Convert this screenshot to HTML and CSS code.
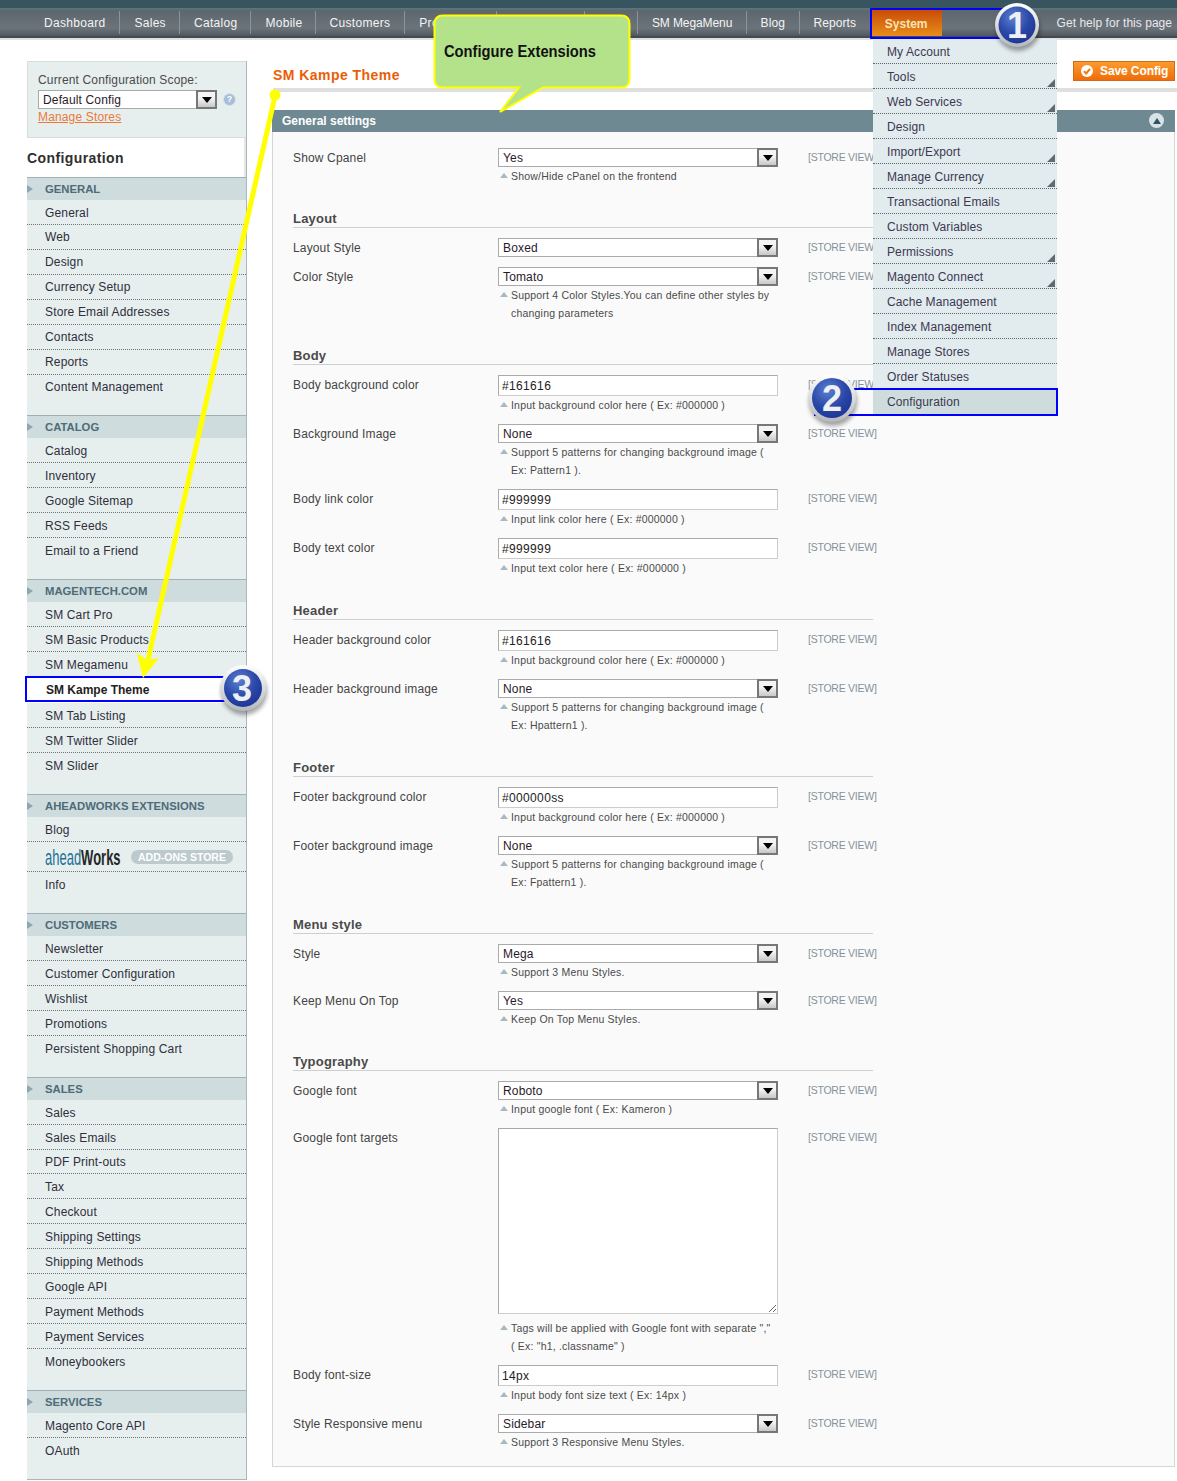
FILE: index.html
```html
<!DOCTYPE html>
<html lang="en">
<head>
<meta charset="utf-8">
<title>Configuration / System / Magento Admin</title>
<link rel="stylesheet" href="styles.css">
</head>
<body>
<div class="page">
  <div class="topband"></div>
  <nav class="nav">
    <ul class="nav-list">
      <li class="nav-first">Dashboard</li><li>Sales</li><li>Catalog</li><li class="nav-short">Mobile</li><li class="nav-first">Customers</li><li>Promotions</li><li>Newsletter</li><li class="nav-cms">CMS</li><li class="nav-tight nav-mega">SM MegaMenu</li><li class="nav-tight">Blog</li><li class="nav-tight">Reports</li><li class="nav-active">System</li>
    </ul>
    <a class="nav-help">Get help for this page</a>
  </nav>

  <div class="columns">
    <aside class="side">
      <div class="scope">
        <div class="scope-label">Current Configuration Scope:</div>
        <div class="scope-row">
          <div class="select scope-select"><span class="select-value">Default Config</span><span class="select-btn"><i class="select-arrow"></i></span></div>
          <span class="help-dot">?</span>
        </div>
        <a class="scope-link">Manage Stores</a>
      </div>
      <h3 class="side-title">Configuration</h3>

      <section class="group group-first">
        <h4 class="group-head"><i class="group-tri"></i>GENERAL</h4>
        <ul class="group-list"><li>General</li><li>Web</li><li>Design</li><li>Currency Setup</li><li>Store Email Addresses</li><li>Contacts</li><li>Reports</li><li>Content Management</li></ul>
      </section>
      <section class="group">
        <h4 class="group-head"><i class="group-tri"></i>CATALOG</h4>
        <ul class="group-list"><li>Catalog</li><li>Inventory</li><li>Google Sitemap</li><li>RSS Feeds</li><li>Email to a Friend</li></ul>
      </section>
      <section class="group">
        <h4 class="group-head"><i class="group-tri"></i>MAGENTECH.COM</h4>
        <ul class="group-list"><li>SM Cart Pro</li><li>SM Basic Products</li><li>SM Megamenu</li><li class="is-current">SM Kampe Theme</li><li>SM Tab Listing</li><li>SM Twitter Slider</li><li>SM Slider</li></ul>
      </section>
      <section class="group">
        <h4 class="group-head"><i class="group-tri"></i>AHEADWORKS EXTENSIONS</h4>
        <ul class="group-list">
          <li>Blog</li>
          <li class="aw-row"><svg class="aw-logo" width="76" height="26" viewBox="0 0 76 26"><text transform="translate(0 21) scale(1 1.650)"><tspan class="aw-ahead">ahead</tspan><tspan class="aw-works">Works</tspan></text></svg><span class="aw-pill">ADD-ONS STORE</span></li>
          <li>Info</li>
        </ul>
      </section>
      <section class="group">
        <h4 class="group-head"><i class="group-tri"></i>CUSTOMERS</h4>
        <ul class="group-list"><li>Newsletter</li><li>Customer Configuration</li><li>Wishlist</li><li>Promotions</li><li>Persistent Shopping Cart</li></ul>
      </section>
      <section class="group">
        <h4 class="group-head"><i class="group-tri"></i>SALES</h4>
        <ul class="group-list"><li>Sales</li><li>Sales Emails</li><li class="is-short">PDF Print-outs</li><li>Tax</li><li>Checkout</li><li>Shipping Settings</li><li>Shipping Methods</li><li>Google API</li><li>Payment Methods</li><li>Payment Services</li><li>Moneybookers</li></ul>
      </section>
      <section class="group">
        <h4 class="group-head"><i class="group-tri"></i>SERVICES</h4>
        <ul class="group-list"><li>Magento Core API</li><li>OAuth</li></ul>
      </section>
    </aside>

    <main class="main">
      <div class="main-head">
        <h3 class="main-title">SM Kampe Theme</h3>
        <button class="save-btn"><span class="save-tick"><svg width="12" height="12" viewBox="0 0 12 12"><path d="M3 6.200 5.200 8.400 9 3.800" fill="none" stroke="#f07a12" stroke-width="2"/></svg></span>Save Config</button>
      </div>
      <div class="panel-head">
        <span>General settings</span>
        <span class="collapse"><i class="collapse-tri"></i></span>
      </div>
      <div class="panel">
        <div class="row"><label class="row-label">Show Cpanel</label><div class="row-field"><div class="select"><span class="select-value">Yes</span><span class="select-btn"><i class="select-arrow"></i></span></div><p class="note">Show/Hide cPanel on the frontend</p></div><span class="row-scope">[STORE VIEW]</span></div>

        <h4 class="legend">Layout</h4>
        <div class="row"><label class="row-label">Layout Style</label><div class="row-field"><div class="select"><span class="select-value">Boxed</span><span class="select-btn"><i class="select-arrow"></i></span></div></div><span class="row-scope">[STORE VIEW]</span></div>
        <div class="row"><label class="row-label">Color Style</label><div class="row-field"><div class="select"><span class="select-value">Tomato</span><span class="select-btn"><i class="select-arrow"></i></span></div><p class="note">Support 4 Color Styles.You can define other styles by changing parameters</p></div><span class="row-scope">[STORE VIEW]</span></div>

        <h4 class="legend">Body</h4>
        <div class="row"><label class="row-label">Body background color</label><div class="row-field"><input class="text" type="text" value="#161616"><p class="note">Input background color here ( Ex: #000000 )</p></div><span class="row-scope">[STORE VIEW]</span></div>
        <div class="row"><label class="row-label">Background Image</label><div class="row-field"><div class="select"><span class="select-value">None</span><span class="select-btn"><i class="select-arrow"></i></span></div><p class="note">Support 5 patterns for changing background image ( Ex: Pattern1 ).</p></div><span class="row-scope">[STORE VIEW]</span></div>
        <div class="row"><label class="row-label">Body link color</label><div class="row-field"><input class="text" type="text" value="#999999"><p class="note">Input link color here ( Ex: #000000 )</p></div><span class="row-scope">[STORE VIEW]</span></div>
        <div class="row"><label class="row-label">Body text color</label><div class="row-field"><input class="text" type="text" value="#999999"><p class="note">Input text color here ( Ex: #000000 )</p></div><span class="row-scope">[STORE VIEW]</span></div>

        <h4 class="legend">Header</h4>
        <div class="row"><label class="row-label">Header background color</label><div class="row-field"><input class="text" type="text" value="#161616"><p class="note">Input background color here ( Ex: #000000 )</p></div><span class="row-scope">[STORE VIEW]</span></div>
        <div class="row"><label class="row-label">Header background image</label><div class="row-field"><div class="select"><span class="select-value">None</span><span class="select-btn"><i class="select-arrow"></i></span></div><p class="note">Support 5 patterns for changing background image ( Ex: Hpattern1 ).</p></div><span class="row-scope">[STORE VIEW]</span></div>

        <h4 class="legend">Footer</h4>
        <div class="row"><label class="row-label">Footer background color</label><div class="row-field"><input class="text" type="text" value="#000000ss"><p class="note">Input background color here ( Ex: #000000 )</p></div><span class="row-scope">[STORE VIEW]</span></div>
        <div class="row"><label class="row-label">Footer background image</label><div class="row-field"><div class="select"><span class="select-value">None</span><span class="select-btn"><i class="select-arrow"></i></span></div><p class="note">Support 5 patterns for changing background image ( Ex: Fpattern1 ).</p></div><span class="row-scope">[STORE VIEW]</span></div>

        <h4 class="legend">Menu style</h4>
        <div class="row"><label class="row-label">Style</label><div class="row-field"><div class="select"><span class="select-value">Mega</span><span class="select-btn"><i class="select-arrow"></i></span></div><p class="note">Support 3 Menu Styles.</p></div><span class="row-scope">[STORE VIEW]</span></div>
        <div class="row"><label class="row-label">Keep Menu On Top</label><div class="row-field"><div class="select"><span class="select-value">Yes</span><span class="select-btn"><i class="select-arrow"></i></span></div><p class="note">Keep On Top Menu Styles.</p></div><span class="row-scope">[STORE VIEW]</span></div>

        <h4 class="legend">Typography</h4>
        <div class="row"><label class="row-label">Google font</label><div class="row-field"><div class="select"><span class="select-value">Roboto</span><span class="select-btn"><i class="select-arrow"></i></span></div><p class="note">Input google font ( Ex: Kameron )</p></div><span class="row-scope">[STORE VIEW]</span></div>
        <div class="row"><label class="row-label">Google font targets</label><div class="row-field"><textarea class="area"></textarea><p class="note note-area">Tags will be applied with Google font with separate "," ( Ex: "h1, .classname" )</p></div><span class="row-scope">[STORE VIEW]</span></div>
        <div class="row"><label class="row-label">Body font-size</label><div class="row-field"><input class="text" type="text" value="14px"><p class="note">Input body font size text ( Ex: 14px )</p></div><span class="row-scope">[STORE VIEW]</span></div>
        <div class="row"><label class="row-label">Style Responsive menu</label><div class="row-field"><div class="select"><span class="select-value">Sidebar</span><span class="select-btn"><i class="select-arrow"></i></span></div><p class="note">Support 3 Responsive Menu Styles.</p></div><span class="row-scope">[STORE VIEW]</span></div>
      </div>
    </main>
  </div>

  <ul class="dropdown">
    <li>My Account</li>
    <li class="has-sub">Tools</li>
    <li class="has-sub">Web Services</li>
    <li>Design</li>
    <li class="has-sub">Import/Export</li>
    <li class="has-sub">Manage Currency</li>
    <li>Transactional Emails</li>
    <li>Custom Variables</li>
    <li class="has-sub">Permissions</li>
    <li class="has-sub">Magento Connect</li>
    <li>Cache Management</li>
    <li>Index Management</li>
    <li>Manage Stores</li>
    <li>Order Statuses</li>
    <li class="is-active">Configuration</li>
  </ul>

  <svg class="notes" width="1177" height="1481" viewBox="0 0 1177 1481">
    <defs>
      <radialGradient id="ball" cx="0.4" cy="0.3" r="0.8"><stop offset="0" stop-color="#5c7fd0"/><stop offset="0.55" stop-color="#2a48a8"/><stop offset="1" stop-color="#1a3290"/></radialGradient>
      <linearGradient id="bezel" x1="0" y1="0" x2="0" y2="1"><stop offset="0" stop-color="#ffffff"/><stop offset="1" stop-color="#b4b8bc"/></linearGradient>
    </defs>
    <rect class="mark" x="871" y="9" width="140" height="29"/>
    <rect class="mark" x="815" y="389" width="242" height="26"/>
    <rect class="mark" x="26" y="677" width="205" height="24"/>

    <path class="call" d="M443 15.500H621Q629.500 15.500 629.500 24V79Q629.500 87.500 621 87.500H543L500 112L519 87.500H443Q434.500 87.500 434.500 79V24Q434.500 15.500 443 15.500Z"/>
    <text class="call-text" x="444" y="57" textLength="152" lengthAdjust="spacingAndGlyphs">Configure Extensions</text>

    <path class="arrow-line" d="M275 96 148 660"/>
    <circle class="arrow-dot" cx="275" cy="95" r="5.500"/>
    <path class="arrow-head" d="M143 678 137 653 147 660 159 658Z"/>

    <g>
      <circle cx="1018" cy="29" r="22" class="ball-shadow"/>
      <circle cx="1017" cy="25" r="22" fill="url(#bezel)"/>
      <circle cx="1017" cy="25" r="18.500" fill="url(#ball)"/>
      <text class="ball-num" x="1017" y="38">1</text>
    </g>
    <g>
      <circle cx="833" cy="402" r="24" class="ball-shadow"/>
      <circle cx="832" cy="398" r="24" fill="url(#bezel)"/>
      <circle cx="832" cy="398" r="20" fill="url(#ball)"/>
      <text class="ball-num" x="832" y="411">2</text>
    </g>
    <g>
      <circle cx="244" cy="692" r="23" class="ball-shadow"/>
      <circle cx="243" cy="688" r="23" fill="url(#bezel)"/>
      <circle cx="243" cy="688" r="19" fill="url(#ball)"/>
      <text class="ball-num" x="242" y="701">3</text>
    </g>
  </svg>
</div>
</body>
</html>
```
FILE: styles.css
```css
* { box-sizing: border-box; }
html, body { margin: 0; padding: 0; background: #fff; }
body {
  font-family: "Liberation Sans", Arial, sans-serif;
  font-size: 12px;
  letter-spacing: 0.15px;
  color: #444;
}
ul { list-style: none; margin: 0; padding: 0; }
h3, h4, p { margin: 0; }

.page { position: relative; width: 1177px; height: 1481px; overflow: hidden; }

.topband { height: 10px; background: #37545f; border-bottom: 2px solid #5a7478; }

.nav {
  display: flex;
  align-items: stretch;
  height: 28px;
  background: linear-gradient(#5e666d, #6c747b 70%, #50575d);
  border-bottom: 2px solid #444b50;
  box-shadow: 0 2px 0 #dfdfdf;
  color: #f4f4f4;
}
.nav-list { display: flex; padding-left: 30px; flex: 1; letter-spacing: 0.3px; }
.nav-list li {
  display: flex;
  align-items: center;
  padding: 0 13px 0 14px;
  border-right: 1px solid #8d9499;
  margin: 1px 0 2px;
}
.nav-list .nav-first { padding-right: 14px; }
.nav-list .nav-short { padding-right: 12px; }
.nav-list .nav-cms { padding-right: 11px; }
.nav-list .nav-tight { padding: 0 13.700px; letter-spacing: 0.1px; }
.nav-list .nav-mega { letter-spacing: -0.1px; }
.nav-list .nav-active {
  margin: -1px 0 0 1px;
  padding: 3px 14px 0 13px;
  background: linear-gradient(#c64a08, #e98c18);
  border-right: 0;
  font-weight: bold;
  letter-spacing: 0;
  color: #f8e4b8;
}
.nav-help { display: flex; align-items: center; padding: 0 5px 1px 0; letter-spacing: 0.03px; color: #e8e8e8; }

.columns { display: flex; padding: 23px 2px 0 27px; gap: 25px; }

.side { width: 220px; flex: none; border-right: 1px solid #a9b9bb; border-bottom: 1px solid #a9b9bb; background: #e7efee; }
.scope {
  height: 77px;
  padding: 11px 10px 0;
  background: #e7efee;
  border: 1px solid #d5dedd;
  border-right: 0;
  color: #4a4a4a;
}
.scope-label { line-height: 15px; }
.scope-row { display: flex; align-items: center; gap: 5px; margin-top: 2px; }
.scope-select { width: 183px; }
.help-dot {
  width: 13px;
  height: 13px;
  margin-left: 1px;
  border-radius: 50%;
  background: #a6bfd8;
  border: 1px solid #d8e2ea;
  color: #fff;
  font-size: 9px;
  font-weight: bold;
  line-height: 11px;
  text-align: center;
  letter-spacing: 0;
}
.scope-link { display: block; color: #ea7a3a; text-decoration: underline; line-height: 16px; }
.side-title {
  height: 39px;
  padding-top: 11px;
  background: #fff;
  border-right: 2px solid #e4e4e4;
  font-size: 14px;
  line-height: 18px;
  font-weight: bold;
  letter-spacing: 0.4px;
  color: #2f2f2f;
}
.group { padding-bottom: 16px; }
.group-first { padding-bottom: 15px; }
.group-head {
  display: flex;
  align-items: center;
  height: 23px;
  border-top: 1px solid #9fb1b5;
  background: #cfdcdd;
  font-size: 11.300px;
  letter-spacing: 0;
  font-weight: bold;
  color: #4d6b78;
}
.group-tri {
  width: 0;
  height: 0;
  margin-right: 12px;
  border-left: 6px solid #8fa6ae;
  border-top: 4px solid transparent;
  border-bottom: 4px solid transparent;
}
.group-list li {
  display: flex;
  align-items: center;
  height: 25px;
  padding: 1px 0 0 18px;
  border-bottom: 1px dotted #6c7577;
  color: #2e2e3c;
}
.group-first .group-list li { padding-top: 0; }
.group-first .group-list li:first-child { padding-top: 1px; }
.group-list li:last-child { border-bottom: 0; }
.group-first .group-list li:last-child { padding-bottom: 1px; }
.group-list .is-short { height: 24px; }
.group-list .is-current { height: 26px; padding: 0 0 1px 19px; background: #fff; font-weight: bold; letter-spacing: 0; color: #222; border-bottom: 0; }
.group-list .aw-row { height: 30px; gap: 10px; padding-top: 0; }
.aw-logo text { font-family: "Liberation Sans", sans-serif; font-size: 13px; letter-spacing: 0; }
.aw-ahead { fill: #1e6f96; }
.aw-works { fill: #262626; font-weight: bold; }
.aw-pill {
  height: 14px;
  padding: 0 7px;
  border-radius: 7px;
  background: #bccacd;
  color: #fff;
  font-size: 10.500px;
  font-weight: bold;
  line-height: 14px;
  letter-spacing: 0;
  white-space: nowrap;
}

.main { width: 903px; flex: none; }
.main-head { display: flex; justify-content: space-between; height: 31px; border-bottom: 4px solid #dfdfdf; margin-right: -2px; padding-right: 2px; margin-left: 1px; }
.main-title { font-size: 14px; line-height: 28px; font-weight: bold; color: #ea5d05; letter-spacing: 0.45px; height: 27px; }
.save-btn {
  display: flex;
  align-items: center;
  gap: 7px;
  width: 102px;
  height: 20px;
  margin: 0;
  padding: 0 0 0 7px;
  border: 1px solid #d2691a;
  background: linear-gradient(#fb9b2e, #ef6c09);
  color: #fff;
  font: bold 12px "Liberation Sans", Arial, sans-serif;
  letter-spacing: -0.1px;
}
.save-tick { display: flex; width: 12px; height: 12px; border-radius: 50%; background: #fff; }
.panel-head {
  display: flex;
  align-items: center;
  justify-content: space-between;
  height: 22px;
  margin-top: 18px;
  padding: 0 11px 1px 10px;
  background: #6f8992;
  color: #fff;
  font-weight: bold;
  letter-spacing: 0;
}
.collapse {
  display: flex;
  align-items: center;
  justify-content: center;
  width: 15px;
  height: 15px;
  border-radius: 50%;
  background: #d9e3e5;
}
.collapse-tri { width: 0; height: 0; border-left: 4px solid transparent; border-right: 4px solid transparent; border-bottom: 6px solid #2a5566; }

.panel {
  height: 1335px;
  padding: 16px 0 6px 20px;
  background: #fafafa;
  border: 1px solid #d6d6d6;
  border-top: 0;
}
.row { display: grid; grid-template-columns: 205px 280px auto; margin-bottom: 10px; }
.row-label { padding-top: 1px; line-height: 18px; color: #444; }
.row-scope { margin-left: 30px; line-height: 19px; font-size: 10.500px; letter-spacing: -0.25px; color: #84929a; }
.row-field { width: 280px; }

.select { display: flex; height: 19px; background: #fff; border: 1px solid #aaa; color: #2a1a2a; }
.select-value { flex: 1; padding-left: 4px; line-height: 18px; }
.select-btn { display: flex; align-items: center; justify-content: center; width: 21px; margin: -1px -1px -1px 0; background: linear-gradient(#f4f4f4 40%, #c8c8c8); border: 2px solid #777; }
.select-arrow { width: 0; height: 0; border-left: 5px solid transparent; border-right: 5px solid transparent; border-top: 6px solid #000; }

.text {
  display: block;
  width: 280px;
  height: 21px;
  margin: 0;
  padding: 0 3px;
  border: 1px solid #aaa;
  border-bottom-color: #ccc;
  border-right-color: #ccc;
  border-radius: 0;
  background: #fff;
  font: 12px "Liberation Sans", Arial, sans-serif;
  letter-spacing: 0.35px;
  color: #222;
  outline: 0;
}
.area {
  display: block;
  width: 280px;
  height: 186px;
  margin: 0;
  border: 1px solid #aaa;
  border-bottom-color: #ccc;
  border-right-color: #ccc;
  border-radius: 0;
  background: #fff;
}
.note {
  position: relative;
  padding-left: 13px;
  padding-right: 4px;
  font-size: 10.500px;
  line-height: 18px;
  letter-spacing: 0.2px;
  color: #4a4a4a;
}
.note::before {
  content: "";
  position: absolute;
  left: 2px;
  top: 6px;
  border-left: 4px solid transparent;
  border-right: 4px solid transparent;
  border-bottom: 5px solid #a8bac0;
}
.note-area { margin-top: 5px; }

.legend {
  height: 33px;
  margin: 0 301px 10px 0;
  padding-top: 15px;
  border-bottom: 1px solid #cfcfcf;
  font-size: 13px;
  line-height: 17px;
  font-weight: bold;
  letter-spacing: 0.2px;
  color: #4a4a4a;
}

.dropdown {
  position: absolute;
  left: 873px;
  top: 39px;
  width: 184px;
  background: #e2ebee;
  letter-spacing: 0.1px;
  color: #3c3850;
}
.dropdown li {
  position: relative;
  display: flex;
  align-items: center;
  height: 25px;
  padding: 1px 0 0 14px;
  border-bottom: 1px dotted #5c6668;
}
.dropdown li:last-child { border-bottom: 0; }
.dropdown .has-sub::after {
  content: "";
  position: absolute;
  right: 2px;
  bottom: 1px;
  border-left: 8px solid transparent;
  border-bottom: 8px solid #5d6b73;
}
.dropdown .is-active { height: 26px; padding-top: 0; background: #cfdcdd; }

.notes { position: absolute; left: 0; top: 0; pointer-events: none; }
.mark { fill: none; stroke: #0000ff; stroke-width: 2; }
.call { fill: #b4e28a; stroke: #ffff00; stroke-width: 2; }
.call-text { font-family: "Liberation Sans", sans-serif; font-size: 17px; font-weight: bold; fill: #111; letter-spacing: 0; }
.arrow-line { fill: none; stroke: #ffff00; stroke-width: 5; }
.arrow-dot, .arrow-head { fill: #ffff00; }
.ball-shadow { fill: #000; opacity: 0.35; filter: blur(2px); }
.ball-num { font-family: "Liberation Sans", sans-serif; font-size: 36px; font-weight: bold; fill: #eef0f4; text-anchor: middle; letter-spacing: 0; }
```
